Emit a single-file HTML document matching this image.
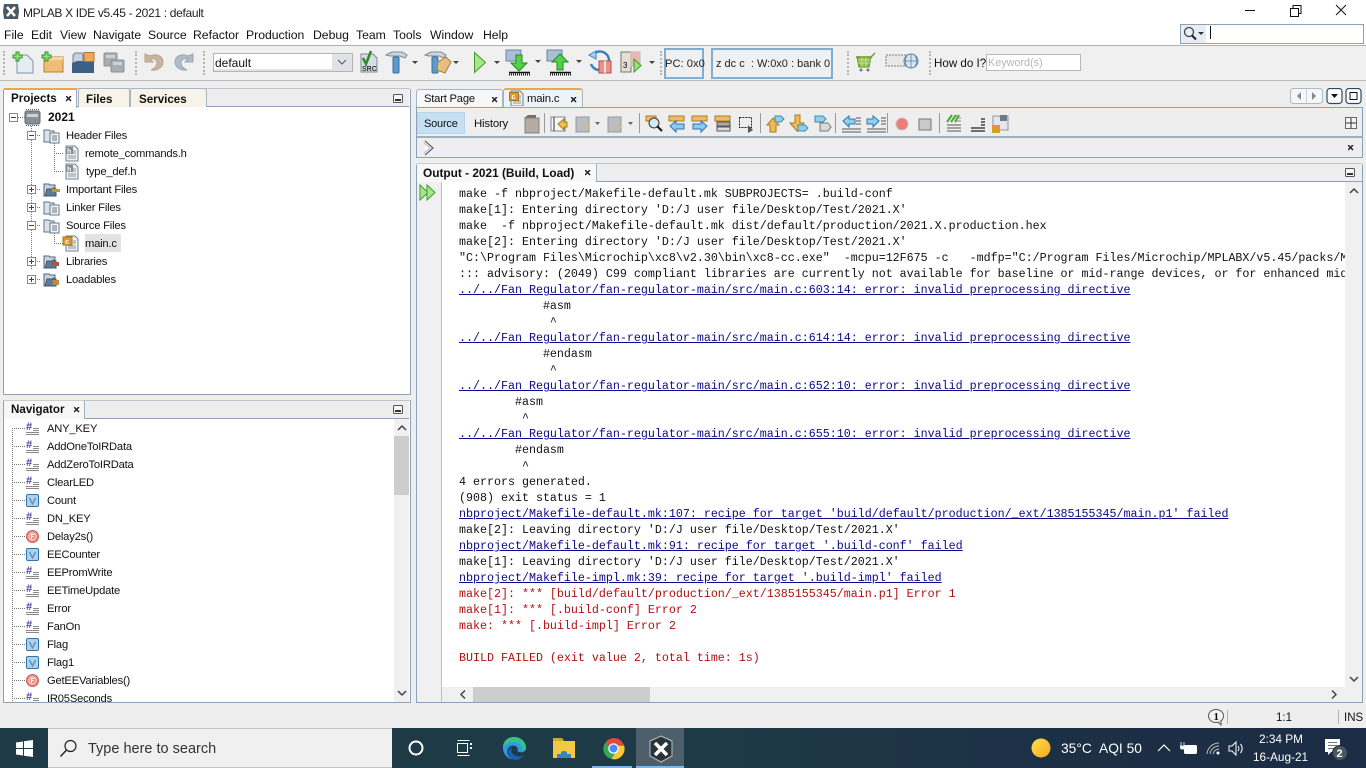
<!DOCTYPE html>
<html><head><meta charset="utf-8"><title>MPLAB X IDE</title>
<style>
html,body{margin:0;padding:0;width:1366px;height:768px;overflow:hidden;background:#eeeeee;font-family:"Liberation Sans",sans-serif;color:#111}
.a,.t,svg.i{position:absolute}
.t{white-space:pre;font-size:11.2px;letter-spacing:-.2px;line-height:22px;height:22px}
.m{font-size:12.2px;top:24px;color:#111;letter-spacing:0}
.b{font-weight:bold;letter-spacing:0}
.o{position:absolute;left:459px;font:11.67px/16px "Liberation Mono",monospace;white-space:pre;color:#111;height:16px;letter-spacing:0}
.l{color:#0a0a8c;text-decoration:underline}
.r{color:#b01010}
.tw{color:#fff;font-size:14.5px;letter-spacing:0}
.ln{stroke:#777;stroke-width:1;stroke-dasharray:1 1;fill:none}
</style></head><body>
<svg width="0" height="0" style="position:absolute"><defs>
<g id="fold"><path d="M1 15V3h5l1 1h5v3h-2v8z" fill="#c9d4de" stroke="#4c6478"/><path d="M2 15l2-7h9v7z" fill="#5d7c96" stroke="#3d5468"/></g>
<g id="foldd"><path d="M1 15V3h5l1 1h4v11z" fill="#dbe3ea" stroke="#5c7488"/><rect x="7" y="6" width="9" height="10" fill="#f2f4f6" stroke="#66798a"/><path d="M9 9h5M9 11h5M9 13h5" stroke="#66798a"/></g>
<g id="file"><path d="M2 1h9l3 3v12H2z" fill="#eef0f3" stroke="#6f7f8e"/><path d="M9 6h3M9 8h3M4 11h8M4 13h8" stroke="#8a97a3"/></g>
<g id="hash"><path d="M0 11.500h13M0 13.500h13M7 7.500h6M7 9.500h6" stroke="#888"/><text x="0" y="9" font-family="Liberation Sans" font-size="11" font-weight="bold" fill="#4f3f9f">#</text></g>
<g id="vv"><rect x=".5" y=".5" width="12" height="12" rx="1.500" fill="#a9d3f2" stroke="#2c75ad"/><path d="M3.500 4l3 6 3-6" fill="none" stroke="#6f8faa" stroke-width="1.500"/></g>
<g id="ff"><circle cx="6.500" cy="6.500" r="6" fill="#ec8f88" stroke="#b8635d"/><circle cx="6.500" cy="6.500" r="3.500" fill="none" stroke="#f8d0cc"/><path d="M5.500 9V4.500h2.500M5.500 6.500h2" stroke="#fff" fill="none"/></g>
<g id="plus"><rect x=".5" y=".5" width="8" height="8" fill="#fff" stroke="#8a8a8a"/><path d="M2 4.500h5M4.500 2v5" stroke="#444"/></g>
<g id="minus"><rect x=".5" y=".5" width="8" height="8" fill="#fff" stroke="#8a8a8a"/><path d="M2 4.500h5" stroke="#444"/></g>
<g id="dn"><path d="M0 0h6L3 3z" fill="#444"/></g>
<g id="min"><rect x=".5" y=".5" width="9" height="8" rx="1" fill="#f6f6f6" stroke="#555"/><rect x="2" y="5" width="6" height="2" fill="#333"/></g>
<g id="xx"><path d="M0 0l5 5M5 0L0 5" stroke="#222" stroke-width="1.500"/></g>
<g id="grn"><path d="M3 0h3v3h3v3H6v3H3V6H0V3h3z" fill="#8fe070" stroke="#2f8f2f"/></g>
</defs></svg>

<!-- title bar -->
<div class="a" style="left:0;top:0;width:1366px;height:45px;background:#fff"></div>
<svg class="i" style="left:2px;top:3px" width="18" height="17" viewBox="0 0 18 17"><path d="M2 1h14l1 7-1 8H2L1 8z" fill="#4a5a62"/><path d="M5 4l8 9M13 4l-8 9" stroke="#fff" stroke-width="2.500"/></svg>
<div class="t" style="left:23px;top:2px;font-size:12px;letter-spacing:-.32px;color:#222">MPLAB X IDE v5.45 - 2021 : default</div>
<svg class="i" style="left:1240px;top:0" width="126" height="22"><path d="M5 10.500h10" stroke="#111"/><path d="M50.500 8.500h8v8h-8zM53 8V5.500h8v8H59" fill="none" stroke="#111"/><path d="M96 5l10 10M106 5L96 15" stroke="#111"/></svg>

<!-- menu -->
<div class="t m" style="left:4px">File</div><div class="t m" style="left:31px">Edit</div><div class="t m" style="left:60px">View</div><div class="t m" style="left:93px">Navigate</div><div class="t m" style="left:148px">Source</div><div class="t m" style="left:193px">Refactor</div><div class="t m" style="left:246px">Production</div><div class="t m" style="left:313px">Debug</div><div class="t m" style="left:356px">Team</div><div class="t m" style="left:393px">Tools</div><div class="t m" style="left:430px">Window</div><div class="t m" style="left:483px">Help</div>
<div class="a" style="left:1180px;top:24px;width:182px;height:18px;border:1px solid #8fa2b4;background:#fff"></div>
<div class="a" style="left:1181px;top:25px;width:25px;height:18px;background:#e6edf5"></div>
<svg class="i" style="left:1183px;top:26px" width="24" height="15"><circle cx="6" cy="6" r="4.500" fill="#e8f0f7" stroke="#444" stroke-width="1.300"/><path d="M9 9.500l4 4" stroke="#222" stroke-width="2"/><path d="M15 6h6l-3 3z" fill="#333"/></svg>
<div class="a" style="left:1210px;top:26px;width:1px;height:13px;background:#111"></div>

<!-- main toolbar -->
<div class="a" style="left:0;top:45px;width:1366px;height:1px;background:#a9b2ba"></div>
<div class="a" style="left:0;top:46px;width:1366px;height:34px;background:#f0f0f0"></div>
<div class="a" style="left:0;top:80px;width:1366px;height:1px;background:#bcbcbc"></div>
<div class="a" style="left:3px;top:51px;height:24px;border-left:2px dotted #b5b5b5"></div>
<div class="a" style="left:135px;top:51px;height:24px;border-left:2px dotted #b5b5b5"></div>
<div class="a" style="left:203px;top:51px;height:24px;border-left:2px dotted #b5b5b5"></div>
<div class="a" style="left:660px;top:51px;height:24px;border-left:2px dotted #b5b5b5"></div>
<div class="a" style="left:847px;top:51px;height:24px;border-left:2px dotted #b5b5b5"></div>
<div class="a" style="left:929px;top:51px;height:24px;border-left:2px dotted #b5b5b5"></div>

<svg class="i" style="left:12px;top:50px" width="24" height="24"><path d="M5 5h10l6 6v12H5z" fill="#e4edf4" stroke="#7f93a6"/><use href="#grn" x="1" y="2"/></svg>
<svg class="i" style="left:41px;top:50px" width="24" height="24"><path d="M3 7h19v15H3z" fill="#f2bc78" stroke="#b9822f"/><path d="M3 7h19v3H3z" fill="#f7d5a3"/><use href="#grn" x="1" y="2"/></svg>
<svg class="i" style="left:71px;top:50px" width="24" height="24"><path d="M2 22V5l2-2h7l1 2v6h10v11z" fill="#c5d2de" stroke="#6a8398"/><path d="M1 23v-10l5-2h17v12z" fill="#3b5f85"/><rect x="13" y="2.500" width="10" height="9" fill="#eea95b" stroke="#a87532"/></svg>
<svg class="i" style="left:102px;top:50px" width="24" height="24"><rect x="2" y="3" width="13" height="13" rx="1" fill="#a7aeb3" stroke="#8a9196"/><rect x="4" y="5" width="9" height="3" fill="#cfd3d6"/><rect x="9" y="10" width="13" height="12" rx="1" fill="#a7aeb3" stroke="#8a9196"/><rect x="11" y="12" width="9" height="3" fill="#cfd3d6"/></svg>
<svg class="i" style="left:142px;top:51px" width="24" height="22"><path d="M3 3v8h8L8 8c3-1 7 0 7 4 0 3-3 6-6 7 8 1 12-4 12-8 0-6-7-9-13-6z" fill="#c9b69e" stroke="#b3a38d"/></svg>
<svg class="i" style="left:172px;top:51px" width="24" height="22"><path d="M21 3v8h-8l3-3c-3-1-7 0-7 4 0 3 3 6 6 7-8 1-12-4-12-8 0-6 7-9 13-6z" fill="#adbcc8" stroke="#9aa9b5"/></svg>
<div class="a" style="left:213px;top:53px;width:138px;height:17px;border:1px solid #b4b4b4;background:#dfe3e8"></div>
<div class="a" style="left:214px;top:54px;width:118px;height:15px;background:#fff"></div>
<div class="t" style="left:215px;top:52px;font-size:12px;letter-spacing:0">default</div>
<svg class="i" style="left:337px;top:59px" width="10" height="6"><path d="M1 1l4 4 4-4" stroke="#555" fill="none"/></svg>

<svg class="i" style="left:360px;top:50px" width="18" height="24"><path d="M1 4h12l4 4v14H1z" fill="#d7dde2" stroke="#7c8a96"/><path d="M3 8l3 6 5-13" stroke="#2d8a2d" stroke-width="2.500" fill="none"/><text x="2" y="21" font-size="7" font-weight="bold" font-family="Liberation Sans" fill="#333">SRC</text></svg>
<svg class="i" style="left:385px;top:50px" width="36" height="24"><path d="M1 5l6-3h10l5 3-2 3-5-2H5z" fill="#cfd6db" stroke="#7f8b94"/><rect x="8" y="7" width="6" height="16" rx="1" fill="#5b9ad0" stroke="#3b6f9c"/><use href="#dn" x="27" y="11"/></svg>
<svg class="i" style="left:424px;top:50px" width="38" height="24"><path d="M1 5l6-3h10l5 3-2 3-5-2H5z" fill="#cfd6db" stroke="#7f8b94"/><rect x="8" y="7" width="6" height="16" rx="1" fill="#5b9ad0" stroke="#3b6f9c"/><path d="M14 12l8-5 5 5-6 11-8-3z" fill="#e9bf7f" stroke="#a97d3b"/><use href="#dn" x="29" y="11"/></svg>
<svg class="i" style="left:471px;top:50px" width="34" height="26"><path d="M3.500 2.500l11 10-11 10z" fill="#a8e58e" stroke="#3f9a2c"/><use href="#dn" x="23" y="11"/></svg>
<svg class="i" style="left:505px;top:49px" width="40" height="27"><rect x="1" y="1" width="15" height="11" fill="#a9bfd6" stroke="#6c87a2"/><path d="M11 6h6v8h5l-8 8-8-8h5z" fill="#53d14b" stroke="#248a24"/><path d="M4 23.500h21" stroke="#111" stroke-width="1.500"/><path d="M4 25.500h21" stroke="#111" stroke-width="2" stroke-dasharray="1 1"/><use href="#dn" x="30" y="11"/></svg>
<svg class="i" style="left:546px;top:49px" width="40" height="27"><rect x="1" y="1" width="15" height="11" fill="#a9bfd6" stroke="#6c87a2"/><path d="M14 5l8 8h-5v8h-6v-8H6z" fill="#53d14b" stroke="#248a24"/><path d="M4 23.500h21" stroke="#111" stroke-width="1.500"/><path d="M4 25.500h21" stroke="#111" stroke-width="2" stroke-dasharray="1 1"/><use href="#dn" x="30" y="11"/></svg>
<svg class="i" style="left:588px;top:50px" width="24" height="24"><path d="M7 3a9 9 0 0 1 14 8" fill="none" stroke="#3a7fc0" stroke-width="2.500"/><path d="M3 14a9 9 0 0 0 8 6" fill="none" stroke="#3a7fc0" stroke-width="2.500"/><path d="M1 5l7-4v8z" fill="#a9d3f2" stroke="#3a7fc0"/><rect x="11" y="11" width="12" height="12" fill="#ef8f87" stroke="#a9504a"/><path d="M17 11v12" stroke="#fff" stroke-width="1.500"/></svg>
<svg class="i" style="left:620px;top:50px" width="38" height="24"><rect x="1" y="2" width="10" height="20" fill="#e3dfd2" stroke="#77756b"/><path d="M11 2h9v14h-9z" fill="#f1b6b0" stroke="#bdbdbd"/><text x="3" y="18" font-size="8" font-family="Liberation Sans">3</text><path d="M14 9l7 6.500-7 6.500z" fill="#99e07f" stroke="#3f9a2c"/><use href="#dn" x="29" y="11"/></svg>

<div class="a" style="left:664px;top:48px;width:36px;height:27px;border:2px solid #80aed3"></div>
<div class="t" style="left:665px;top:53px;font-size:11.2px;letter-spacing:0;color:#222">PC: 0x0</div>
<div class="a" style="left:711px;top:48px;width:118px;height:27px;border:2px solid #80aed3"></div>
<div class="t" style="left:716px;top:53px;font-size:11px;letter-spacing:0;color:#222">z dc c  : W:0x0 : bank 0</div>

<svg class="i" style="left:855px;top:52px" width="22" height="20"><path d="M1 5h15l4-4" fill="none" stroke="#6fa02c" stroke-width="1.500"/><path d="M2 5h14l-2 10H4z" fill="#8fc14a" stroke="#5d8a2a"/><path d="M3 8h13M3 11h12M7 5v10M11 5v10" stroke="#d6ebb0" stroke-width=".7"/><circle cx="6" cy="18" r="1.500" fill="#777"/><circle cx="13" cy="18" r="1.500" fill="#777"/></svg>
<svg class="i" style="left:885px;top:52px" width="36" height="18"><rect x="1" y="3" width="22" height="11" fill="#e8e8e8" stroke="#7e7e7e" stroke-dasharray="2 1"/><circle cx="26" cy="9" r="7" fill="#d5e4f1" stroke="#5e7f9e"/><path d="M19 9h14M26 2v14M22 3.500c-2 3-2 8 0 11M30 3.500c2 3 2 8 0 11" fill="none" stroke="#5e7f9e" stroke-width=".8"/></svg>
<div class="t" style="left:934px;top:53px;font-size:11.6px;letter-spacing:0">How do I?</div>
<div class="a" style="left:986px;top:54px;width:93px;height:15px;border:1px solid #b9b9b9;background:#fff"></div>
<div class="t" style="left:988px;top:52px;font-size:10.8px;letter-spacing:0;color:#b5b5b5">Keyword(s)</div>

<!-- Projects panel -->
<div class="a" style="left:3px;top:88px;width:406px;height:305px;border:1px solid #8ba2b8;border-top-color:#b8c4cf;background:#fff;border-radius:3px 3px 0 0"></div>
<div class="a" style="left:4px;top:89px;width:405px;height:17px;background:#eeeeee;border-bottom:1px solid #8ba2b8"></div>
<div class="a" style="left:4px;top:88px;width:73px;height:20px;background:#fff;border-top:2px solid #e9a84a;box-sizing:border-box;border-right:1px solid #9fb0c0"></div>
<div class="a" style="left:78px;top:88px;width:52px;height:19px;background:#f8f3e9;border:1px solid #a5b5c3;border-bottom:0;box-sizing:border-box;border-radius:3px 3px 0 0"></div>
<div class="a" style="left:130px;top:88px;width:77px;height:19px;background:#f8f3e9;border:1px solid #a5b5c3;border-bottom:0;box-sizing:border-box;border-radius:3px 3px 0 0"></div>
<div class="t b" style="left:11px;top:88px;font-size:11.6px">Projects</div>
<svg class="i" style="left:66px;top:96px" width="6" height="6"><use href="#xx"/></svg>
<div class="t b" style="left:86px;top:89px;font-size:11.6px">Files</div>
<div class="t b" style="left:139px;top:89px;font-size:11.6px">Services</div>
<svg class="i" style="left:393px;top:94px" width="10" height="9"><use href="#min"/></svg>

<svg class="i" style="left:4px;top:108px" width="130" height="185">
<path class="ln" d="M14 9.500h8M27.500 18v144M31 27.500h6M31 81.500h6M31 99.500h6M31 117.500h6M31 153.500h6M31 171.500h6M50.500 35v28M50 45.500h10M50 63.500h10M50.500 125v10M50 135.500h10"/>
<use href="#minus" x="5" y="5"/>
<rect x="21" y="3" width="15" height="13" rx="2" fill="#8a8f93" stroke="#666"/><rect x="23" y="6" width="11" height="3" fill="#d0d3d6"/><path d="M22 1.500h13M22 17.500h13" stroke="#555" stroke-dasharray="1 1"/>
<use href="#minus" x="23" y="23"/><use href="#foldd" x="39" y="19"/>
<use href="#file" x="60" y="37"/><rect x="62" y="39" width="7" height="7" fill="#808a93"/><text x="63" y="45.500" font-size="7" font-weight="bold" font-family="Liberation Sans" fill="#fff">h</text>
<use href="#file" x="60" y="55"/><rect x="62" y="57" width="7" height="7" fill="#808a93"/><text x="63" y="63.500" font-size="7" font-weight="bold" font-family="Liberation Sans" fill="#fff">h</text>
<use href="#plus" x="23" y="77"/><use href="#fold" x="39" y="73"/><rect x="48" y="81" width="8" height="3" fill="#b89a4a"/>
<use href="#plus" x="23" y="95"/><use href="#foldd" x="39" y="91"/>
<use href="#minus" x="23" y="113"/><use href="#foldd" x="39" y="109"/>
<use href="#file" x="60" y="127"/><rect x="59" y="129" width="9" height="8" fill="#d99c2b" stroke="#a8761f"/><text x="61" y="136" font-size="7" font-weight="bold" font-family="Liberation Sans" fill="#fff">c</text>
<use href="#plus" x="23" y="149"/><use href="#fold" x="39" y="145"/><rect x="47" y="154" width="8" height="4" fill="#9a5a50"/>
<use href="#plus" x="23" y="167"/><use href="#fold" x="39" y="163"/><rect x="49" y="172" width="6" height="5" fill="#c88a30"/>
</svg>
<div class="t b" style="left:48px;top:106px;font-size:12px">2021</div>
<div class="t" style="left:66px;top:125px">Header Files</div>
<div class="t" style="left:85px;top:143px">remote_commands.h</div>
<div class="t" style="left:86px;top:161px">type_def.h</div>
<div class="t" style="left:66px;top:179px">Important Files</div>
<div class="t" style="left:66px;top:197px">Linker Files</div>
<div class="t" style="left:66px;top:215px">Source Files</div>
<div class="a" style="left:85px;top:234px;width:36px;height:18px;background:#e3e3e3"></div>
<div class="t" style="left:85px;top:233px">main.c</div>
<div class="t" style="left:66px;top:251px">Libraries</div>
<div class="t" style="left:66px;top:269px">Loadables</div>

<!-- Navigator -->
<div class="a" style="left:3px;top:400px;width:406px;height:301px;border:1px solid #8ba2b8;border-top-color:#b8c4cf;background:#fff"></div>
<div class="a" style="left:4px;top:401px;width:405px;height:17px;background:#eeeeee;border-bottom:1px solid #8ba2b8"></div>
<div class="a" style="left:4px;top:400px;width:81px;height:19px;box-sizing:border-box;border-top:1px solid #c7ced5;border-right:1px solid #9fb0c0;background:#f7f7f7"></div>
<div class="t b" style="left:11px;top:399px;font-size:11.6px">Navigator</div>
<svg class="i" style="left:74px;top:407px" width="6" height="6"><use href="#xx"/></svg>
<svg class="i" style="left:393px;top:405px" width="10" height="9"><use href="#min"/></svg>
<div class="a" style="left:4px;top:419px;width:405px;height:283px;overflow:hidden">
<svg class="a" style="left:0;top:0" width="60" height="283"><path class="ln" d="M8.500 9v274M8 9.500h14M8 27.500h14M8 45.500h14M8 63.500h14M8 81.500h14M8 99.500h14M8 117.500h14M8 135.500h14M8 153.500h14M8 171.500h14M8 189.500h14M8 207.500h14M8 225.500h14M8 243.500h14M8 261.500h14M8 279.500h14"/>
<g transform="translate(0,1)"><use href="#hash" x="22" y="1"/><use href="#hash" x="22" y="19"/><use href="#hash" x="22" y="37"/><use href="#hash" x="22" y="55"/><use href="#vv" x="22" y="74"/><use href="#hash" x="22" y="91"/><use href="#ff" x="22" y="110"/><use href="#vv" x="22" y="128"/><use href="#hash" x="22" y="145"/><use href="#hash" x="22" y="163"/><use href="#hash" x="22" y="181"/><use href="#hash" x="22" y="199"/><use href="#vv" x="22" y="218"/><use href="#vv" x="22" y="236"/><use href="#ff" x="22" y="254"/><use href="#hash" x="22" y="271"/></g></svg>
<div class="t" style="left:43px;top:-1px">ANY_KEY</div>
<div class="t" style="left:43px;top:17px">AddOneToIRData</div>
<div class="t" style="left:43px;top:35px">AddZeroToIRData</div>
<div class="t" style="left:43px;top:53px">ClearLED</div>
<div class="t" style="left:43px;top:71px">Count</div>
<div class="t" style="left:43px;top:89px">DN_KEY</div>
<div class="t" style="left:43px;top:107px">Delay2s()</div>
<div class="t" style="left:43px;top:125px">EECounter</div>
<div class="t" style="left:43px;top:143px">EEPromWrite</div>
<div class="t" style="left:43px;top:161px">EETimeUpdate</div>
<div class="t" style="left:43px;top:179px">Error</div>
<div class="t" style="left:43px;top:197px">FanOn</div>
<div class="t" style="left:43px;top:215px">Flag</div>
<div class="t" style="left:43px;top:233px">Flag1</div>
<div class="t" style="left:43px;top:251px">GetEEVariables()</div>
<div class="t" style="left:43px;top:269px">IR05Seconds</div>
<div class="a" style="left:390px;top:0;width:15px;height:283px;background:#f0f0f0"></div>
<div class="a" style="left:390px;top:17px;width:15px;height:59px;background:#cdcdcd"></div>
<svg class="a" style="left:390px;top:0" width="15" height="283"><path d="M4 11l4-4 4 4M4 272l4 4 4-4" fill="none" stroke="#444" stroke-width="1.500"/></svg>
</div>

<!-- Editor tabs -->
<div class="a" style="left:416px;top:89px;width:87px;height:19px;background:#f7f7f7;border:1px solid #a5b5c3;border-bottom:0;box-sizing:border-box;border-radius:3px 3px 0 0"></div>
<div class="a" style="left:503px;top:88px;width:80px;height:20px;background:#eef3f9;border:1px solid #a5b5c3;border-top:2px solid #e9a84a;border-bottom:0;box-sizing:border-box;border-radius:3px 3px 0 0"></div>
<div class="t" style="left:424px;top:88px">Start Page</div>
<svg class="i" style="left:492px;top:97px" width="6" height="6"><use href="#xx"/></svg>
<svg class="i" style="left:509px;top:90px" width="16" height="16"><use href="#file"/><rect x="0.500" y="2.500" width="9" height="8" fill="#d99c2b" stroke="#a8761f"/><text x="2.500" y="9" font-size="7" font-weight="bold" font-family="Liberation Sans" fill="#fff">c</text></svg>
<div class="t" style="left:527px;top:88px;font-size:11.4px">main.c</div>
<svg class="i" style="left:571px;top:97px" width="6" height="6"><use href="#xx"/></svg>
<svg class="i" style="left:1290px;top:88px" width="74" height="18"><rect x=".5" y=".5" width="32" height="15" rx="3" fill="#f4f6f8" stroke="#a9bac9"/><path d="M16.500 1v14" stroke="#cfd8df"/><path d="M11 4v8L7 8zM22 4v8l4-4z" fill="#888"/><rect x="37" y=".5" width="15" height="15" rx="3" fill="#fff" stroke="#2c4a68" stroke-width="1.200"/><path d="M41 6h7l-3.500 4z" fill="#111"/><rect x="56" y=".5" width="15" height="15" rx="3" fill="#fff" stroke="#2c4a68" stroke-width="1.200"/><rect x="60" y="4.500" width="7" height="7" fill="none" stroke="#111"/></svg>

<!-- Editor toolbar -->
<div class="a" style="left:416px;top:107px;width:947px;height:1px;background:#8ba2b8"></div>
<div class="a" style="left:416px;top:136px;width:947px;height:2px;background:#9eafbd"></div>
<div class="a" style="left:1362px;top:107px;width:1px;height:50px;background:#8ba2b8"></div>
<div class="a" style="left:416px;top:108px;width:1px;height:50px;background:#8ba2b8"></div>
<div class="a" style="left:417px;top:112px;width:48px;height:22px;background:#c5dff3;border:1px solid #b5d3ea;box-sizing:border-box"></div>
<div class="t" style="left:424px;top:113px;font-size:11px">Source</div>
<div class="t" style="left:474px;top:113px;font-size:11.4px">History</div>
<div class="a" style="left:544px;top:113px;width:1px;height:20px;background:#9a9a9a"></div>
<div class="a" style="left:639px;top:113px;width:1px;height:20px;background:#9a9a9a"></div>
<div class="a" style="left:760px;top:113px;width:1px;height:20px;background:#9a9a9a"></div>
<div class="a" style="left:835px;top:113px;width:1px;height:20px;background:#9a9a9a"></div>
<div class="a" style="left:887px;top:113px;width:1px;height:20px;background:#9a9a9a"></div>
<div class="a" style="left:939px;top:113px;width:1px;height:20px;background:#9a9a9a"></div>
<svg class="i" style="left:520px;top:112px" width="505" height="24" viewBox="0 0 505 24">
<path d="M4 6h12V3H8z" fill="#6f6f6f"/><path d="M5 6h14v15H5z" fill="#b4aba4" stroke="#8a817b"/>
<rect x="31" y="5" width="14" height="14" fill="#f7f7f7" stroke="#7c8a96"/><path d="M34 5v14" stroke="#333"/><path d="M38 12l6-5v3h3v5h-3v3z" fill="#f2c04f" stroke="#a87c20"/>
<rect x="56" y="5" width="13" height="15" fill="#b9bfc4" stroke="#999"/><path d="M62 15l5-4v2h3v4h-3v2z" fill="#cbb9a0"/><path d="M75 10h5l-2.500 3z" fill="#666"/>
<rect x="88" y="5" width="13" height="15" fill="#b9bfc4" stroke="#999"/><path d="M102 15l-5-4v2h-3v4h3v2z" fill="#cbb9a0"/><path d="M108 10h5l-2.500 3z" fill="#666"/>
<rect x="126" y="4" width="10" height="5" fill="#f0bb6d" stroke="#a87c20"/><circle cx="134" cy="11" r="5" fill="#d7e8f5" stroke="#333"/><path d="M137 14l5 5" stroke="#111" stroke-width="2"/>
<rect x="149" y="4" width="15" height="5" fill="#f0bb6d" stroke="#a87c20"/><path d="M150 14l6-5v3h8v5h-8v3z" fill="#8ecbf2" stroke="#2f76ad"/>
<rect x="172" y="4" width="15" height="5" fill="#f0bb6d" stroke="#a87c20"/><path d="M187 14l-6-5v3h-8v5h8v3z" fill="#8ecbf2" stroke="#2f76ad"/>
<rect x="195" y="4" width="15" height="5" fill="#f0bb6d" stroke="#a87c20"/><rect x="197" y="10" width="13" height="4" fill="#aaa" stroke="#555"/><rect x="197" y="15" width="13" height="4" fill="#ddd" stroke="#555"/>
<rect x="219.500" y="5.500" width="12" height="10" fill="none" stroke="#222" stroke-dasharray="2 1"/><path d="M228 13l5 5-5 3z" fill="#555"/>
<path d="M253 6l6 7h-3v7h-6v-7h-3z" fill="#f2ba55" stroke="#a87c20"/><path d="M255 4h6l3 3-3 3h-6z" fill="#8fd0ef" stroke="#4a88a8"/>
<path d="M275 3h5v8h4l-7 8-7-8h5z" fill="#f2ba55" stroke="#a87c20"/><path d="M278 13h7l3 3-3 3h-7z" fill="#8fd0ef" stroke="#4a88a8"/>
<path d="M295 4h8l3 3-3 3h-8z" fill="#8fd0ef" stroke="#4a88a8"/><path d="M300 11h8l3 4-3 4h-8z" fill="#d9d9d9" stroke="#777"/>
<path d="M323 9l6-5v3h6v5h-6v3z" fill="#8fd0ef" stroke="#2f76ad"/><path d="M336 6h5M336 9h5M336 12h5M322 17h19M322 20h19" stroke="#555"/>
<path d="M359 9l-6-5v3h-6v5h6v3z" fill="#8fd0ef" stroke="#2f76ad"/><path d="M361 6h5M361 9h5M361 12h5M347 17h19M347 20h19" stroke="#555"/>
<circle cx="382" cy="12" r="6" fill="#ee7c78" stroke="#c9c3bf"/>
<rect x="399" y="7" width="12" height="11" fill="#c9c9c9" stroke="#777"/>
<path d="M427 10l5-7M431 10l5-7M435 10l4-7" stroke="#4ca82c" stroke-width="2"/><path d="M427 13h14M427 16h14M427 19h14" stroke="#555"/><path d="M436 6h5M436 9h5" stroke="#888"/>
<path d="M451 16h14M451 19h14M461 7h4M461 10h4M461 13h4" stroke="#222" stroke-width="1.300"/>
<path d="M473 4h6l3 3 6-3v14h-15z" fill="#e3e8ec" stroke="#8a97a3"/><rect x="480" y="3" width="7" height="6" fill="#707a82"/><rect x="472" y="13" width="8" height="8" fill="#d99c2b"/>
</svg>
<svg class="i" style="left:1345px;top:117px" width="14" height="14"><rect x=".5" y=".5" width="11" height="11" fill="#f5f5f5" stroke="#666"/><path d="M6 1v10M1 6h10" stroke="#333"/></svg>
<div class="a" style="left:416px;top:157px;width:947px;height:1px;background:#8ba2b8"></div>
<svg class="i" style="left:423px;top:140px" width="14" height="16"><path d="M2 1l8 7-8 7" fill="#fff" stroke="#666" stroke-width="1.300"/><path d="M1 3l6 5-6 5" fill="none" stroke="#bbb"/></svg>
<svg class="i" style="left:1348px;top:145px" width="6" height="6"><use href="#xx"/></svg>

<!-- Output panel -->
<div class="a" style="left:416px;top:163px;width:945px;height:538px;border:1px solid #8ba2b8;border-top-color:#b8c4cf;background:#fff;border-radius:3px 3px 0 0"></div>
<div class="a" style="left:417px;top:164px;width:945px;height:17px;background:#eeeeee;border-bottom:1px solid #8ba2b8"></div>
<div class="a" style="left:417px;top:163px;width:180px;height:19px;background:#f7f7f7;box-sizing:border-box;border-right:1px solid #9fb0c0;border-top:1px solid #c7ced5"></div>
<div class="t b" style="left:423px;top:162px;font-size:11.85px">Output - 2021 (Build, Load)</div>
<svg class="i" style="left:585px;top:170px" width="6" height="6"><use href="#xx"/></svg>
<svg class="i" style="left:1345px;top:168px" width="10" height="9"><use href="#min"/></svg>
<div class="a" style="left:417px;top:182px;width:24px;height:520px;background:#f0f0f0;border-right:1px solid #bfbfbf"></div>
<svg class="i" style="left:419px;top:184px" width="18" height="17"><path d="M1 1l8 7.500-8 7.500z" fill="#a6e68f" stroke="#3f9a2c"/><path d="M8 1l8 7.500-8 7.500z" fill="#a6e68f" stroke="#3f9a2c"/></svg>

<div class="a" style="left:442px;top:182px;width:903px;height:505px;overflow:hidden">
<div style="position:absolute;left:-442px;top:-182px;width:1345px">
<div class="o" style="top:186px">make -f nbproject/Makefile-default.mk SUBPROJECTS= .build-conf</div>
<div class="o" style="top:202px">make[1]: Entering directory 'D:/J user file/Desktop/Test/2021.X'</div>
<div class="o" style="top:218px">make  -f nbproject/Makefile-default.mk dist/default/production/2021.X.production.hex</div>
<div class="o" style="top:234px">make[2]: Entering directory 'D:/J user file/Desktop/Test/2021.X'</div>
<div class="o" style="top:250px">"C:\Program Files\Microchip\xc8\v2.30\bin\xc8-cc.exe"  -mcpu=12F675 -c   -mdfp="C:/Program Files/Microchip/MPLABX/v5.45/packs/Microchip</div>
<div class="o" style="top:266px">::: advisory: (2049) C99 compliant libraries are currently not available for baseline or mid-range devices, or for enhanced mid-range</div>
<div class="o l" style="top:282px">../../Fan Regulator/fan-regulator-main/src/main.c:603:14: error: invalid preprocessing directive</div>
<div class="o" style="top:298px">            #asm</div>
<div class="o" style="top:314px">             ^</div>
<div class="o l" style="top:330px">../../Fan Regulator/fan-regulator-main/src/main.c:614:14: error: invalid preprocessing directive</div>
<div class="o" style="top:346px">            #endasm</div>
<div class="o" style="top:362px">             ^</div>
<div class="o l" style="top:378px">../../Fan Regulator/fan-regulator-main/src/main.c:652:10: error: invalid preprocessing directive</div>
<div class="o" style="top:394px">        #asm</div>
<div class="o" style="top:410px">         ^</div>
<div class="o l" style="top:426px">../../Fan Regulator/fan-regulator-main/src/main.c:655:10: error: invalid preprocessing directive</div>
<div class="o" style="top:442px">        #endasm</div>
<div class="o" style="top:458px">         ^</div>
<div class="o" style="top:474px">4 errors generated.</div>
<div class="o" style="top:490px">(908) exit status = 1</div>
<div class="o l" style="top:506px">nbproject/Makefile-default.mk:107: recipe for target 'build/default/production/_ext/1385155345/main.p1' failed</div>
<div class="o" style="top:522px">make[2]: Leaving directory 'D:/J user file/Desktop/Test/2021.X'</div>
<div class="o l" style="top:538px">nbproject/Makefile-default.mk:91: recipe for target '.build-conf' failed</div>
<div class="o" style="top:554px">make[1]: Leaving directory 'D:/J user file/Desktop/Test/2021.X'</div>
<div class="o l" style="top:570px">nbproject/Makefile-impl.mk:39: recipe for target '.build-impl' failed</div>
<div class="o r" style="top:586px">make[2]: *** [build/default/production/_ext/1385155345/main.p1] Error 1</div>
<div class="o r" style="top:602px">make[1]: *** [.build-conf] Error 2</div>
<div class="o r" style="top:618px">make: *** [.build-impl] Error 2</div>
<div class="o r" style="top:650px">BUILD FAILED (exit value 2, total time: 1s)</div>
</div></div>
<div class="a" style="left:1345px;top:182px;width:17px;height:520px;background:#f0f0f0"></div>
<svg class="i" style="left:1345px;top:184px" width="17" height="12"><path d="M5 9l4-4 4 4" fill="none" stroke="#444" stroke-width="1.500"/></svg>
<svg class="i" style="left:1345px;top:674px" width="17" height="12"><path d="M5 3l4 4 4-4" fill="none" stroke="#444" stroke-width="1.500"/></svg>
<div class="a" style="left:442px;top:687px;width:920px;height:15px;background:#f0f0f0"></div>
<div class="a" style="left:473px;top:687px;width:177px;height:15px;background:#cdcdcd"></div>
<svg class="i" style="left:458px;top:689px" width="884" height="11"><path d="M7 1.500L3 5.500l4 4M874 1.500l4 4-4 4" fill="none" stroke="#444" stroke-width="1.500"/></svg>

<!-- status bar -->
<svg class="i" style="left:1207px;top:708px" width="20" height="18"><ellipse cx="9" cy="8" rx="7.500" ry="6.500" fill="#f3f3f3" stroke="#555"/><path d="M11 14l3 3v-4" fill="#f3f3f3" stroke="#555"/><text x="6.500" y="12" font-family="Liberation Serif" font-size="11" font-weight="bold" fill="#111">1</text></svg>
<div class="a" style="left:1227px;top:710px;width:1px;height:14px;background:#b0b0b0"></div>
<div class="t" style="left:1276px;top:707px;font-size:11.5px;letter-spacing:0">1:1</div>
<div class="a" style="left:1338px;top:710px;width:1px;height:14px;background:#b0b0b0"></div>
<div class="t" style="left:1344px;top:707px;font-size:11.5px;letter-spacing:0">INS</div>

<!-- taskbar -->
<div class="a" style="left:0;top:728px;width:1366px;height:40px;background:linear-gradient(90deg,#1f3a47 0,#1f3a47 700px,#1c2f45 1100px,#1b2c44 1366px)"></div>
<svg class="i" style="left:16px;top:740px" width="17" height="17"><path d="M0 2.500l7-1v6.500H0zM8 1.300l9-1.300v8H8zM0 9h7v6.500l-7-1zM8 9h9v8l-9-1.300z" fill="#fff"/></svg>
<div class="a" style="left:48px;top:728px;width:344px;height:40px;background:#f0f0f0;border-top:1px solid #c4c4c4;border-bottom:1px solid #c4c4c4;box-sizing:border-box"></div>
<svg class="i" style="left:59px;top:739px" width="19" height="19"><circle cx="11.500" cy="7" r="5.500" fill="none" stroke="#222" stroke-width="1.200"/><path d="M7.500 11L1.500 17.500" stroke="#222" stroke-width="1.400"/></svg>
<div class="t" style="left:88px;top:738px;font-size:14.5px;letter-spacing:0;color:#333">Type here to search</div>
<svg class="i" style="left:406px;top:738px" width="20" height="20"><circle cx="10" cy="10" r="6.500" fill="none" stroke="#fff" stroke-width="2"/></svg>
<svg class="i" style="left:454px;top:738px" width="20" height="20"><path d="M3.500 2.500h12M3.500 17.500h12" stroke="#fff"/><rect x="3.500" y="5.500" width="10" height="9" fill="none" stroke="#fff"/><path d="M16 5h2v2h-2zM16 9h2v2h-2z" fill="#fff"/></svg>
<svg class="i" style="left:502px;top:736px" width="24" height="24"><path d="M1 12C1 5 6 1 12 1c7 0 12 5 12 11 0 3-3 5-6 4-3 0-3-2-2-3-1-3-4-4-7-3-3 1-5 5-3 9 1 2 3 4 6 4C6 24 1 18 1 12z" fill="#2f9ae0"/><path d="M1 12C1 5 6 1 12 1c7 0 12 5 12 11 0 1-1 3-3 3 0-6-5-9-10-9-5 0-8 3-10 6z" fill="#35c18a"/><path d="M6 16c0 4 3 7 7 8 4 0 7-2 9-5-4 2-8 2-11-1-2-2-2-5-1-7-2 1-4 3-4 5z" fill="#1a5fb4"/></svg>
<svg class="i" style="left:553px;top:737px" width="22" height="22"><path d="M0 1h9l2 3h11v17H0z" fill="#f5c842"/><path d="M0 1h9l2 3H0z" fill="#d7a52d"/><path d="M8 21v-5c0-1 1-2 3-2s3 1 3 2v5z" fill="#3a83b5"/><path d="M4 17h14v4H14v-4H8v4H4z" fill="#3a83b5"/></svg>
<svg class="i" style="left:602px;top:737px" width="23" height="23" viewBox="0 0 24 24"><path d="M12 12L3 6.500A11 11 0 0 1 23 9H12z" fill="#e2483d"/><path d="M3 6.500A11 11 0 0 0 10 23l5-7-3-4z" fill="#3aa757"/><path d="M23 9A11 11 0 0 1 10 23l5-8-1-6z" fill="#fcc934"/><circle cx="12" cy="12" r="5.500" fill="#fff"/><circle cx="12" cy="12" r="4.200" fill="#4b8bf5"/></svg>
<div class="a" style="left:636px;top:728px;width:48px;height:40px;background:#4d5f6b"></div>
<div class="a" style="left:592px;top:766px;width:40px;height:2px;background:#76b9ed"></div>
<div class="a" style="left:636px;top:766px;width:48px;height:2px;background:#76b9ed"></div>
<svg class="i" style="left:648px;top:735px" width="26" height="28"><path d="M13 1l11 5v15l-11 6-11-6V6z" fill="#2a353b" stroke="#b8bfc3"/><path d="M7 8l12 12M19 8L7 20" stroke="#fff" stroke-width="3.500"/></svg>

<svg class="i" style="left:1031px;top:738px" width="20" height="20"><defs><linearGradient id="sun" x1="0" y1="0" x2="1" y2="1"><stop offset="0" stop-color="#ffe14d"/><stop offset="1" stop-color="#f7a71c"/></linearGradient></defs><circle cx="10" cy="10" r="9.500" fill="url(#sun)"/></svg>
<div class="t tw" style="left:1061px;top:738px;font-size:13.8px">35°C</div>
<div class="t tw" style="left:1099px;top:738px;font-size:13.8px">AQI 50</div>
<svg class="i" style="left:1157px;top:743px" width="14" height="9"><path d="M1 8l6-6 6 6" fill="none" stroke="#fff" stroke-width="1.200"/></svg>
<svg class="i" style="left:1180px;top:741px" width="17" height="14"><rect x="4.500" y="4.500" width="12" height="8" rx="1" fill="#fff" stroke="#fff"/><path d="M1 1v4M4 1v4M0 5h5l-1 3H1z" stroke="#fff" fill="#fff" stroke-width=".8"/></svg>
<svg class="i" style="left:1206px;top:741px" width="16" height="15"><path d="M1 13a12 12 0 0 1 12-11M4 13a9 9 0 0 1 9-8M7 13a6 6 0 0 1 6-5" fill="none" stroke="#bbb"/><circle cx="12" cy="12" r="1.500" fill="#fff"/></svg>
<svg class="i" style="left:1228px;top:741px" width="17" height="15"><path d="M1 5h3l4-4v13l-4-4H1z" fill="none" stroke="#fff"/><path d="M10 5a4 4 0 0 1 0 5M12.500 3a7 7 0 0 1 0 9" fill="none" stroke="#fff"/></svg>
<div class="t tw" style="left:1259px;top:731px;font-size:11.8px;line-height:17px;height:17px">2:34 PM</div>
<div class="t tw" style="left:1253px;top:749px;font-size:11.8px;line-height:17px;height:17px">16-Aug-21</div>
<svg class="i" style="left:1323px;top:738px" width="28" height="26"><path d="M2 1h15v13H8l-3 3v-3H2z" fill="#fff"/><path d="M5 4.500h9M5 7.500h9M5 10.500h6" stroke="#777"/><circle cx="17" cy="15" r="7.500" fill="#4a5560" stroke="#1b2c44"/><text x="13.500" y="19" font-family="Liberation Sans" font-size="11" font-weight="bold" fill="#fff">2</text></svg>
</body></html>
